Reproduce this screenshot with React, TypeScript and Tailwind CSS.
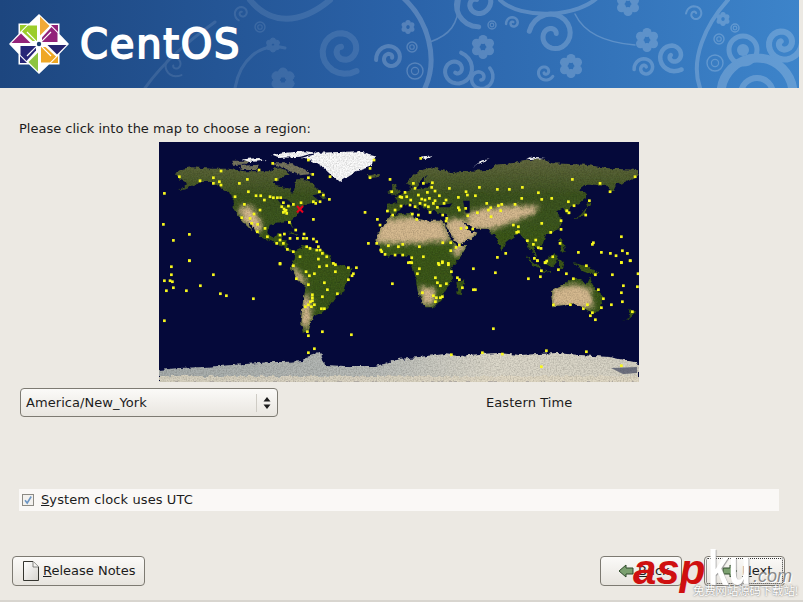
import React from "react";

type Pt = [number, number];

// [lon, lat] outlines, the map is a plain 2:1 equirectangular projection
const LAND: Pt[][] = [
  [[-168,66],[-162,70],[-156,71],[-140,70],[-128,70],[-115,68],[-95,68],[-94,72],[-85,69],[-82,66],[-94,60],[-92,57],[-82,55],[-80,51],[-79,55],[-77,62],[-70,62],[-65,59],[-60,54],[-56,52],[-65,50],[-60,46],[-66,44],[-70,43],[-74,40],[-76,35],[-81,31],[-80,26],[-82,28],[-84,30],[-90,29],[-97,28],[-98,22],[-95,18],[-90,21],[-87,21],[-88,16],[-83,15],[-83,10],[-78,9],[-80,7],[-85,10],[-92,14],[-97,16],[-105,20],[-110,27],[-113,31],[-110,23],[-115,28],[-120,34],[-124,40],[-124,48],[-130,54],[-140,60],[-150,60],[-158,56],[-165,54],[-158,59],[-165,62]],
  [[-78,9],[-72,12],[-62,10],[-52,5],[-50,0],[-35,-6],[-39,-15],[-41,-22],[-48,-26],[-53,-34],[-57,-38],[-65,-42],[-68,-52],[-72,-53],[-74,-45],[-72,-30],[-70,-18],[-76,-14],[-81,-5],[-79,2]],
  [[-6,35],[10,37],[11,33],[20,31],[32,31],[35,27],[37,20],[43,12],[51,12],[45,2],[39,-5],[40,-15],[35,-20],[32,-28],[26,-34],[19,-34],[14,-22],[12,-10],[9,-1],[9,4],[0,6],[-8,4],[-13,9],[-17,15],[-16,22],[-10,30]],
  [[-9,37],[-9,43],[-1,44],[-4,48],[3,51],[8,54],[8,57],[12,55],[20,55],[24,59],[18,60],[22,65],[18,62],[12,56],[5,59],[14,68],[25,71],[40,67],[44,68],[68,69],[72,73],[85,74],[105,78],[115,74],[140,73],[160,70],[180,69],[180,65],[170,60],[163,58],[160,52],[155,58],[140,58],[135,54],[142,50],[135,44],[128,40],[127,35],[122,40],[118,38],[122,31],[120,25],[110,20],[108,14],[105,9],[100,13],[103,3],[98,10],[95,16],[90,22],[80,15],[77,8],[73,18],[67,25],[57,25],[52,28],[48,30],[52,24],[58,22],[55,17],[44,13],[39,21],[35,28],[36,36],[28,37],[26,40],[23,37],[20,41],[18,40],[13,45],[16,38],[9,44],[3,42],[0,38],[-5,36]],
  [[114,-22],[122,-18],[130,-12],[136,-12],[140,-17],[143,-11],[146,-19],[153,-26],[150,-37],[144,-38],[138,-34],[131,-31],[124,-33],[115,-34]],
  [[95,5],[104,-2],[106,-6],[101,-3]],
  [[109,1],[117,6],[119,1],[115,-4],[110,-2]],
  [[106,-6],[114,-7],[114,-8],[106,-7]],
  [[120,1],[124,1],[122,-5],[120,-4]],
  [[131,-1],[141,-3],[150,-9],[143,-9],[138,-7]],
  [[120,18],[122,18],[125,8],[122,7]],
  [[130,32],[136,35],[141,41],[140,36],[135,33]],
  [[141,45],[145,44],[142,42]],
  [[43,-16],[49,-13],[47,-25],[44,-24]],
  [[167,-46],[174,-41],[178,-38],[173,-36],[172,-42]],
  [[-5,50],[1,51],[-2,57],[-5,58]],
  [[-10,52],[-6,54],[-6,52]],
  [[-24,65],[-15,66],[-14,64],[-22,63]],
  [[-85,22],[-75,20],[-78,22]],
  [[-73,19],[-69,19],[-70,18]],
  [[-125,49],[-123,49],[-128,51]],
  [[-60,50],[-53,48],[-57,47]],
];

const ARCTIC: Pt[][] = [
  [[-120,72],[-105,73],[-108,69],[-118,69]],
  [[-95,74],[-80,74],[-70,70],[-65,66],[-75,65],[-85,70]],
  [[-125,76],[-112,76],[-115,73],[-124,73]],
];

const ICE: Pt[][] = [
  [[-73,78],[-60,82],[-30,83],[-18,80],[-20,72],[-32,68],[-42,62],[-44,60],[-50,65],[-55,70],[-65,76]],
  [[-95,80],[-85,82],[-70,83],[-62,82],[-75,79],[-90,78]],
  [[-118,77],[-105,78],[-100,76],[-112,75]],
  [[15,79],[25,80],[20,77]],
  [[55,71],[62,76],[68,77],[58,73]],
  [[100,79],[110,78],[95,77]],
];

const DESERT: Pt[][] = [
  [[-17,22],[-10,32],[10,34],[32,31],[36,22],[38,16],[10,14],[-17,14]],
  [[34,32],[48,32],[60,24],[54,15],[44,12],[38,20]],
  [[50,36],[62,40],[85,42],[105,42],[100,35],[85,30],[68,24],[54,26]],
  [[114,-20],[132,-17],[144,-20],[146,-34],[135,-35],[115,-34]],
  [[-120,42],[-111,42],[-103,30],[-104,22],[-110,24],[-118,32]],
  [[15,-18],[27,-20],[27,-31],[18,-33]],
  [[-70,-22],[-66,-30],[-66,-44],[-70,-52],[-74,-44],[-72,-28]],
  [[-81,-4],[-76,-14],[-69,-18],[-71,-12],[-78,-4]],
  [[44,4],[51,12],[44,13],[40,7]],
];

// snow edge of Antarctica, [x, y] in map pixels
const ANTARCTICA: Pt[] = [[0,228],[20,226],[45,225],[60,224],[100,221],[112,220],[125,220],[145,219],[148,215],[157,212],[160,209],[163,214],[166,223],[185,224],[200,224],[215,224],[225,222],[240,217],[260,215],[285,212],[300,214],[320,212],[340,211],[360,213],[380,212],[398,211],[420,213],[450,215],[465,218],[475,220],[480,223],[480,240],[0,240]];

// dot positions as read off four 3x crops of the map
const DOTS_NW: Pt[] = [[88,125],[213,108],[327,105],[368,85],[475,75],[672,75],[660,100],[540,125],[488,118],[475,128],[660,128],[720,133],[378,133],[292,133],[268,145],[190,128],[150,137],[190,145],[208,140],[213,150],[43,175],[295,170],[255,185],[318,182],[332,182],[343,195],[360,185],[370,188],[382,188],[392,188],[508,170],[520,180],[538,193],[510,200],[490,200],[497,205],[453,203],[430,208],[415,213],[400,203],[283,208],[330,225],[312,237],[275,248],[300,250],[323,268],[305,265],[345,280],[40,268],[118,298],[70,316],[118,377],[490,253],[418,262],[437,285],[462,297],[403,297],[390,300],[322,290],[352,305],[390,315],[380,325],[400,325],[420,310],[442,310],[460,310],[470,310],[490,312],[500,320],[505,335],[510,345],[500,345],[470,335],[480,340],[412,343],[430,350],[450,365],[390,385],[505,372],[517,355],[530,365],[550,385],[645,232],[682,253],[655,325],[690,270],[680,325],[692,345],[695,350],[715,332],[745,335],[705,358],[735,360],[750,185],[725,170],[735,225],[712,228],[728,240],[395,215],[402,222],[405,228],[410,235],[400,232],[408,226]];
const DOTS_NE: Pt[] = [[62,70],[517,133],[600,145],[705,125],[630,170],[40,145],[70,145],[97,143],[45,160],[95,157],[105,168],[148,160],[238,157],[292,163],[328,163],[367,157],[415,173],[198,170],[202,180],[226,182],[175,187],[365,190],[425,193],[455,190],[15,172],[5,187],[20,185],[55,180],[82,172],[88,190],[65,192],[75,195],[118,182],[105,197],[32,195],[138,195],[132,205],[30,210],[45,215],[60,205],[75,210],[100,205],[3,213],[85,215],[112,217],[175,218],[178,225],[197,220],[260,205],[295,212],[305,208],[345,208],[272,218],[265,225],[302,227],[505,200],[568,197],[522,212],[500,227],[507,233],[557,240],[232,233],[90,232],[37,237],[55,240],[128,240],[140,250],[138,258],[50,253],[203,242],[273,245],[483,257],[425,265],[340,270],[355,275],[355,290],[350,292],[183,280],[200,278],[218,282],[483,283],[452,292],[407,315],[382,317],[400,328],[415,338],[423,340],[480,325],[664,305],[580,323],[577,328],[8,328],[58,335],[128,323],[152,323],[178,330],[168,337],[152,347],[535,352],[604,352],[631,355],[648,362],[667,347],[682,355],[690,377],[664,382],[317,355],[292,367],[403,370],[412,377],[458,365],[440,378],[435,383],[70,365],[35,368],[8,360],[30,382],[127,380],[115,385],[145,385]];
const DOTS_SW: Pt[] = [[64,20],[118,2],[390,12],[430,17],[64,44],[190,44],[43,62],[60,62],[67,65],[70,83],[49,92],[109,92],[151,77],[211,101],[229,107],[310,116],[43,182],[727,71],[508,20],[530,17],[556,14],[595,23],[619,23],[468,35],[478,47],[493,41],[556,35],[610,41],[606,47],[595,59],[439,56],[475,74],[523,68],[532,89],[562,101],[517,110],[487,104],[487,113],[487,122],[481,125],[493,134],[475,134],[466,140],[484,140],[514,146],[523,146],[472,215],[475,227],[517,215],[604,224],[493,266],[475,278]];
const DOTS_SE: Pt[] = [[25,8],[35,8],[58,26],[52,41],[117,14],[127,8],[145,14],[154,35],[220,26],[286,38],[106,53],[172,53],[178,59],[187,83],[112,68],[121,77],[139,71],[67,98],[100,107],[109,113],[121,113],[127,110],[106,125],[220,89],[226,89],[280,206],[385,56],[421,50],[424,32],[475,29],[499,41],[559,17],[586,44],[637,44],[714,41],[520,56],[670,77],[664,98],[712,80],[595,89],[610,116],[667,125],[634,134],[460,134],[511,134],[562,134],[550,146],[604,143],[577,158],[571,167],[586,179],[697,155],[664,8],[691,2],[412,2],[436,8],[154,284],[247,278],[307,282],[439,272],[559,275],[424,320],[664,317]];

const DOTS: Pt[] = [
  ...DOTS_NW.map(([x, y]): Pt => [x / 3 - 9, y / 3 - 7]),
  ...DOTS_NE.map(([x, y]): Pt => [x / 3 + 241, y / 3 - 7]),
  ...DOTS_SW.map(([x, y]): Pt => [x / 3 - 9, y / 3 + 118]),
  ...DOTS_SE.map(([x, y]): Pt => [x / 3 + 241, y / 3 + 118]),
];

const project = (pts: Pt[]) =>
  pts.map(([lon, lat]) => `${((lon + 180) / 360) * 480},${((90 - lat) / 180) * 240}`).join(" ");

function WorldMap() {
  return (
    <svg viewBox="0 0 480 240" className="block h-[240px] w-[480px]">
      <defs>
        <linearGradient id="landTone" gradientUnits="userSpaceOnUse" x1="0" y1="15" x2="0" y2="170">
          <stop offset="0" stopColor="#666a42" />
          <stop offset="0.25" stopColor="#3e5422" />
          <stop offset="0.6" stopColor="#3d5a1e" />
          <stop offset="1" stopColor="#3a561d" />
        </linearGradient>
        <linearGradient id="snow" x1="0" y1="0" x2="1" y2="0">
          <stop offset="0" stopColor="#a7adac" />
          <stop offset="0.45" stopColor="#b9bcb8" />
          <stop offset="0.7" stopColor="#dcd8ca" />
          <stop offset="1" stopColor="#d6d2c4" />
        </linearGradient>
        {/* rough coastlines plus a light mottling over the land */}
        <filter id="rough" x="0" y="0" width="100%" height="100%">
          <feTurbulence type="fractalNoise" baseFrequency="0.18" numOctaves="3" seed="7" result="warp" />
          <feDisplacementMap in="SourceGraphic" in2="warp" scale="5" xChannelSelector="R" yChannelSelector="G" result="shape" />
          <feTurbulence type="fractalNoise" baseFrequency="0.7" numOctaves="2" seed="4" result="n" />
          <feColorMatrix in="n" type="matrix" values="0 0 0 0 0  0 0 0 0 0  0 0 0 0 0  0.7 0 0 0 -0.24" result="d" />
          <feComposite in="d" in2="shape" operator="in" result="m" />
          <feMerge>
            <feMergeNode in="shape" />
            <feMergeNode in="m" />
          </feMerge>
        </filter>
        <filter id="soft" x="-30%" y="-30%" width="160%" height="160%">
          <feGaussianBlur stdDeviation="2.4" />
        </filter>
        <clipPath id="land">
          {LAND.map((p, i) => (
            <polygon key={i} points={project(p)} />
          ))}
        </clipPath>
      </defs>
      <rect width="480" height="240" fill="#05093a" />
      <g filter="url(#rough)">
        {LAND.map((p, i) => (
          <polygon key={i} points={project(p)} fill="url(#landTone)" />
        ))}
        {ARCTIC.map((p, i) => (
          <polygon key={i} points={project(p)} fill="#77765f" />
        ))}
        <g clipPath="url(#land)">
          <g filter="url(#soft)">
            {DESERT.map((p, i) => (
              <polygon key={i} points={project(p)} fill="#d6ba90" />
            ))}
          </g>
        </g>
        {ICE.map((p, i) => (
          <polygon key={i} points={project(p)} fill="#fcfcfc" />
        ))}
        <polygon points={ANTARCTICA.map((p) => p.join(",")).join(" ")} fill="url(#snow)" />
        <rect x="0" y="234" width="480" height="8" fill="#e2d9c4" opacity="0.8" />
      </g>
      <polygon points="452,226 478,225 478,231 464,232" fill="#2a3050" opacity="0.6" />
      {/* lakes and inland seas */}
      <polygon points={project([[-92,48],[-84,47],[-79,43],[-83,42],[-88,43]])} fill="#05093a" opacity="0.85" />
      <polygon points={project([[28,42],[40,44],[38,41],[30,41]])} fill="#05093a" />
      <polygon points={project([[48,46],[53,46],[53,37],[50,37]])} fill="#05093a" />
      {DOTS.map(([x, y], i) => (
        <rect key={i} x={x - 1.3} y={y - 1.3} width="2.7" height="2.7" fill="#f8f81c" />
      ))}
      <path d="M138 64l6 6.5M144 64l-6 6.5" stroke="#e8001c" strokeWidth="2" />
    </svg>
  );
}

function spiral(cx: number, cy: number, r: number, turns: number, start: number) {
  let d = "";
  const steps = Math.round(turns * 24);
  for (let i = 0; i <= steps; i++) {
    const t = i / steps;
    const a = start + t * turns * Math.PI * 2;
    const rr = r * (1 - t * 0.85);
    d += `${i ? "L" : "M"}${(cx + Math.cos(a) * rr).toFixed(1)} ${(cy + Math.sin(a) * rr).toFixed(1)}`;
  }
  return d;
}

function Flower({ x, y, r }: { x: number; y: number; r: number }) {
  return (
    <g fill="#fff">
      {[0, 60, 120, 180, 240, 300].map((a) => (
        <circle
          key={a}
          cx={x + Math.sin((a * Math.PI) / 180) * r * 0.62}
          cy={y - Math.cos((a * Math.PI) / 180) * r * 0.62}
          r={r * 0.38}
        />
      ))}
    </g>
  );
}

function Rings({ x, y, r }: { x: number; y: number; r: number }) {
  return (
    <g fill="none" stroke="#fff">
      <circle cx={x} cy={y} r={r} strokeWidth="1.4" />
      <circle cx={x} cy={y} r={r * 0.45} strokeWidth="1.2" />
    </g>
  );
}

function Swirls() {
  return (
    <svg viewBox="0 0 799 88" className="absolute inset-0 h-[88px] w-[799px]">
      <g opacity="0.1" fill="none" stroke="#fff" strokeLinecap="round">
        <path d="M145 88C165 60 190 40 215 22" strokeWidth="3" />
        <path d={spiral(175, 65, 12, 1.3, 1)} strokeWidth="2" />
        <path d="M235 88C240 60 260 42 285 48" strokeWidth="3" />
        <path d="M250 0C270 25 300 25 330 0" strokeWidth="6" />
        <path d={spiral(343, 50, 25, 1.5, 1)} strokeWidth="6" />
        <path d={spiral(242, 13, 8, 1.4, 2)} strokeWidth="2" />
        <Rings x={260} y={27} r={5} />
        <Flower x={283} y={80} r={12} />
        <Flower x={273} y={45} r={7} />
      </g>
      <g opacity="0.2">
        <Flower x={483} y={47} r={12} />
        <Flower x={571} y={66} r={12} />
        <Flower x={647} y={40} r={12} />
        <Flower x={723} y={19} r={7} />
        <Flower x={408} y={27} r={7} />
        <Flower x={628} y={4} r={12} />
        <Rings x={415} y={71} r={8} />
        <Rings x={412} y={47} r={5} />
        <Rings x={719} y={39} r={5} />
        <Rings x={715} y={63} r={8} />
        <Rings x={735} y={28} r={4} />
        <Rings x={492} y={25} r={4} />
        <g fill="none" stroke="#fff" strokeLinecap="round">
          <path d={spiral(783, 43, 19, 1.6, 0)} strokeWidth="6" />
          <circle cx="743" cy="50" r="14" strokeWidth="5" />
          <circle cx="743" cy="50" r="6" fill="#fff" stroke="none" />
          <circle cx="757" cy="94" r="36" strokeWidth="9" />
          <circle cx="757" cy="94" r="16" strokeWidth="6" />
          <path d={spiral(390, 58, 14, 1.5, 3)} strokeWidth="4" />
          <path d="M400 -5C430 20 438 60 425 88" strokeWidth="5" />
          <path d={spiral(477, 3, 24, 1.5, 1.5)} strokeWidth="5" />
          <path d="M500 0C520 20 580 18 600 -5" strokeWidth="4" />
          <path d={spiral(553, 35, 24, 1.4, 3.3)} strokeWidth="5" />
          <path d={spiral(456, 70, 18, 1.5, 5)} strokeWidth="4" />
          <path d={spiral(480, 78, 14, 1.3, 5.5)} strokeWidth="3.5" />
          <path d={spiral(545, 72, 9, 1.3, 0.5)} strokeWidth="3" />
          <path d={spiral(513, 23, 7, 1.3, 3)} strokeWidth="2.5" />
          <path d="M430 42C450 35 458 25 460 0" strokeWidth="1.6" />
          <path d="M575 14C585 35 610 43 635 45" strokeWidth="1.5" />
          <path d={spiral(673, 56, 16, 1.4, 1)} strokeWidth="4.5" />
          <path d={spiral(645, 68, 11, 1.4, 3)} strokeWidth="3.5" />
          <path d="M700 88C690 60 705 25 728 0" strokeWidth="4" />
          <path d={spiral(695, 14, 9, 1.4, 3.2)} strokeWidth="2" />
        </g>
      </g>
    </svg>
  );
}

function CentosLogo() {
  const arms = [
    { rot: 0, tip: "#f0a936", sq: "#932279" },
    { rot: 90, tip: "#27246f", sq: "#efa724" },
    { rot: 180, tip: "#8cc43f", sq: "#262577" },
    { rot: 270, tip: "#932279", sq: "#9ccd2a" },
  ];
  return (
    <svg viewBox="-31 -31 62 62" className="h-[62px] w-[62px] shrink-0">
      <polygon
        points="0,-30 10,-20.5 20.5,-20.5 20.5,-10 30,0 20.5,10 20.5,20.5 10,20.5 0,30 -10,20.5 -20.5,20.5 -20.5,10 -30,0 -20.5,-10 -20.5,-20.5 -10,-20.5"
        fill="#fff"
      />
      {arms.map((a) => (
        <g key={a.rot} transform={`rotate(${a.rot})`}>
          <polygon points="1,-27.5 10.5,-18 1,-8.5" fill={a.tip} />
          <polygon points="12,-19 19,-19 19,-12 " fill={a.sq} />
          <polygon points="12.5,-17 18.5,-11 18.5,-2 3,-2 3,-6.5 " fill={a.sq} />
          <path d="M2.2 -2.2L12 -12" stroke="#fff" strokeWidth="1.2" />
        </g>
      ))}
      <circle r="2.2" fill="#1d3f72" />
    </svg>
  );
}

function Header() {
  return (
    <div className="relative h-[88px] w-[799px] shrink-0 overflow-hidden bg-gradient-to-r from-[#1d467f] via-[#2a62a8] to-[#3d84ca]">
      <Swirls />
      <div className="relative flex h-full items-center pl-[8px]">
        <CentosLogo />
        <span className="ml-[10px] font-['DejaVu_Sans'] text-[40px] font-normal leading-none tracking-[1.8px] text-white [-webkit-text-stroke:1.8px_white]">
          CentOS
        </span>
      </div>
    </div>
  );
}

function FileIcon() {
  return (
    <svg viewBox="0 0 18 20" className="h-[20px] w-[18px] shrink-0">
      <defs>
        <linearGradient id="page" x1="0" y1="0" x2="1" y2="1">
          <stop offset="0" stopColor="#ffffff" />
          <stop offset="1" stopColor="#d6d4ce" />
        </linearGradient>
      </defs>
      <path d="M1.5 .5H11L16.5 6V19.5H1.5Z" fill="url(#page)" stroke="#35352f" />
      <path d="M11 .5V6H16.5" fill="#f4f3f0" stroke="#6b6a64" strokeWidth=".8" />
    </svg>
  );
}

function Arrow({ flip }: { flip?: boolean }) {
  return (
    <svg viewBox="0 0 16 14" className={flip ? "h-[14px] w-[16px] rotate-180" : "h-[14px] w-[16px]"}>
      <path d="M1 7L8 1V4H15V10H8V13Z" fill="#7ba06f" stroke="#2f4a2b" />
    </svg>
  );
}

function GtkButton({ className, children }: { className: string; children: React.ReactNode }) {
  return (
    <div
      className={`flex h-[30px] items-center rounded-[4px] border border-[#7d7a72] bg-gradient-to-b from-[#fbfaf8] to-[#e7e4de] text-[13px] text-[#1c1c1c] ${className}`}
    >
      {children}
    </div>
  );
}

export default function App() {
  return (
    <div className="relative flex h-[602px] w-[803px] flex-col overflow-hidden border-b-2 border-b-[#d8d5cf] bg-[#ece9e3] font-['DejaVu_Sans',sans-serif] text-[13px] text-[#1c1c1c]">
      <Header />

      <p className="ml-[19px] mt-[33px] leading-[16px]">Please click into the map to choose a region:</p>

      <div className="ml-[159px] mt-[5px] w-[480px]">
        <WorldMap />
      </div>

      <div className="ml-[20px] mt-[6px] flex items-center">
        <div className="flex h-[29px] w-[258px] items-center rounded-[4px] border border-[#7d7a72] bg-gradient-to-b from-[#fbfaf8] to-[#e9e6e0] pl-[5px] pr-[5px]">
          <span className="grow tracking-[0.06px]">America/New_York</span>
          <span className="mr-[4px] h-[18px] w-px bg-[#cfccc5]" />
          <svg viewBox="0 0 8 14" className="ml-[2px] mr-[1px] h-[14px] w-[8px]">
            <path d="M4 1L7.5 5.5H.5ZM4 13L.5 8.5H7.5Z" fill="#1c1c1c" />
          </svg>
        </div>
        <span className="ml-[208px] tracking-[0.08px]">Eastern Time</span>
      </div>

      <div className="ml-[19px] mt-[72px] flex h-[22px] w-[760px] items-center bg-[#faf8f6]">
        <span className="ml-[3px] flex h-[12px] w-[12px] items-center justify-center border border-[#8c8a84] bg-[#f3f1ee]">
          <svg viewBox="0 0 10 10" className="h-[10px] w-[10px]">
            <path d="M2 5.2L4.2 8L8.2 1.5" fill="none" stroke="#6d96c4" strokeWidth="1.6" />
          </svg>
        </span>
        <span className="ml-[7px] tracking-[0.1px]">
          <span className="underline">S</span>ystem clock uses UTC
        </span>
      </div>

      <div className="ml-[12px] mr-[18px] mt-[45px] flex justify-between">
        <GtkButton className="w-[133px] pl-[9px]">
          <FileIcon />
          <span className="ml-[3px]">
            <span className="underline">R</span>elease Notes
          </span>
        </GtkButton>
        <div className="flex gap-[22px]">
          <GtkButton className="w-[82px] pl-[17px]">
            <Arrow />
            <span className="ml-[4px]">
              <span className="underline">B</span>ack
            </span>
          </GtkButton>
          <GtkButton className="w-[81px] pl-[17px] outline-1 -outline-offset-3 outline-dotted outline-[#333]">
            <Arrow flip />
            <span className="ml-[4px]">
              <span className="underline">N</span>ext
            </span>
          </GtkButton>
        </div>
      </div>

      {/* site watermark stamped over the corner */}
      <span className="absolute left-[633px] top-[549px] font-['Liberation_Sans'] text-[42px] font-bold italic leading-none text-[#cf1010]">
        asp
      </span>
      <span className="absolute left-[708px] top-[543px] origin-left scale-x-[0.74] font-['Liberation_Sans'] text-[50px] font-bold leading-none text-white [text-shadow:1px_1px_1px_#999]">
        ku
      </span>
      <span className="absolute left-[753px] top-[567px] font-['Liberation_Sans'] text-[18px] italic leading-none text-[#8a8a8a] [text-shadow:1px_1px_0_#fff]">
        .com
      </span>
      <span className="absolute left-[693px] top-[583px] font-['Noto_Sans_CJK_SC',sans-serif] text-[11.3px] leading-[14px] text-white [text-shadow:0_0_2px_#555]">
        免费网站源码下载站!
      </span>
    </div>
  );
}
